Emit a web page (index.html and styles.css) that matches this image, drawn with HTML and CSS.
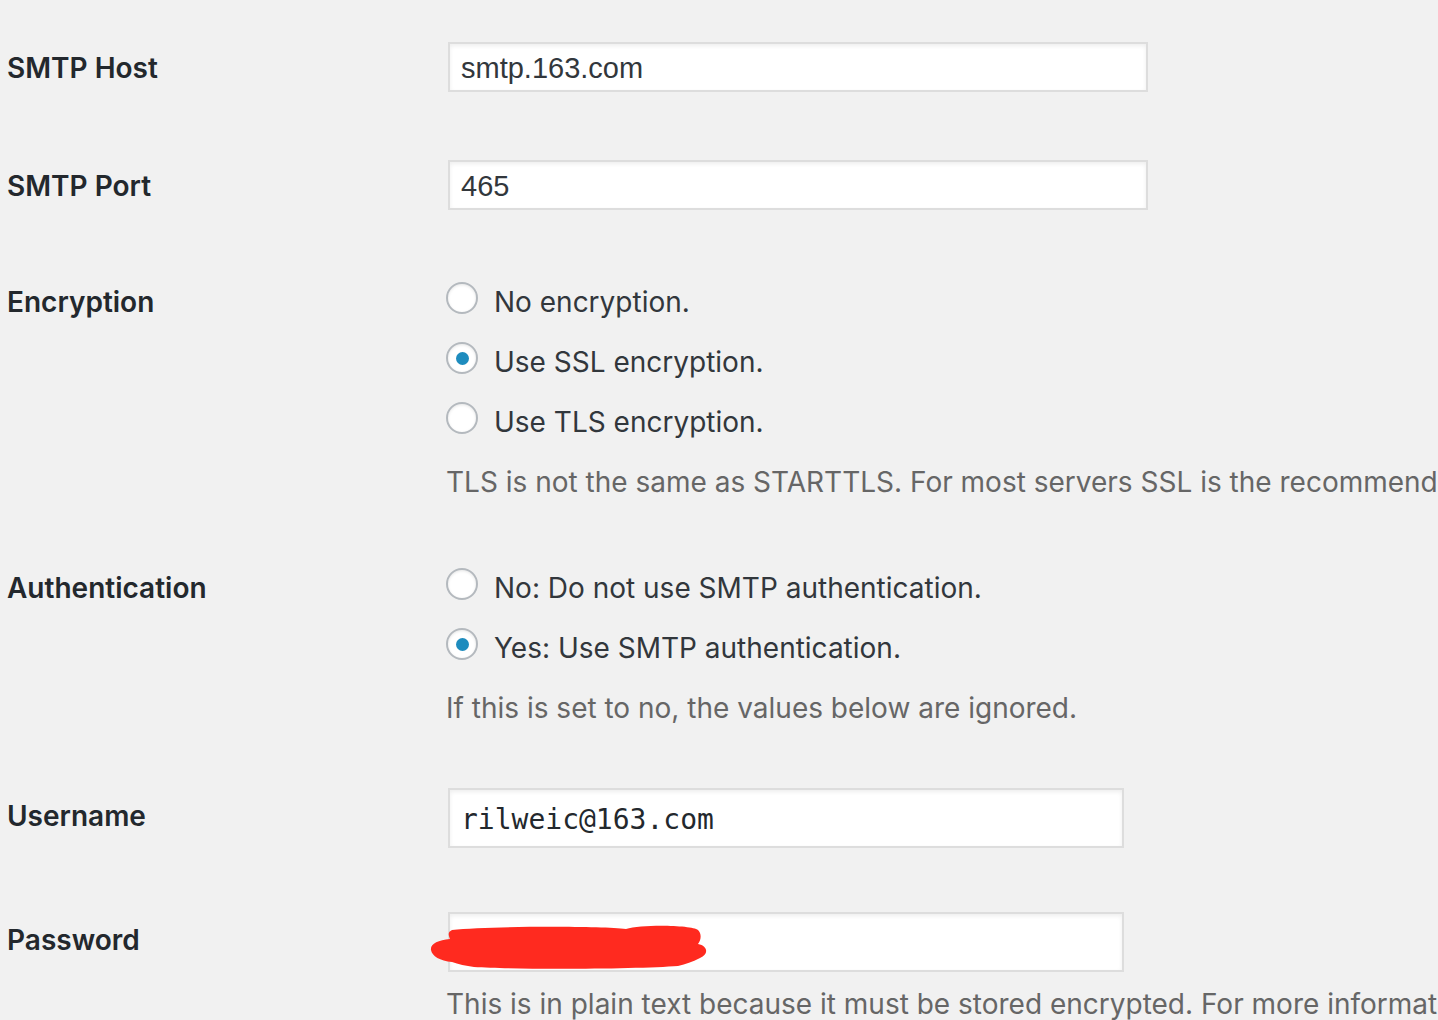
FILE: index.html
```html
<!DOCTYPE html>
<html>
<head>
<meta charset="utf-8">
<link rel="stylesheet" href="styles.css">
</head>
<body>
<div class="form">
  <div class="row row-host">
    <div class="label lh50">SMTP Host</div>
    <div class="field"><div class="input wide">smtp.163.com</div></div>
  </div>
  <div class="row row-port">
    <div class="label lh50">SMTP Port</div>
    <div class="field"><div class="input wide">465</div></div>
  </div>
  <div class="row row-enc">
    <div class="label lh60">Encryption</div>
    <div class="field">
      <div class="radio-line"><span class="radio"></span><span class="rtext">No encryption.</span></div>
      <div class="radio-line"><span class="radio checked"></span><span class="rtext">Use SSL encryption.</span></div>
      <div class="radio-line"><span class="radio"></span><span class="rtext">Use TLS encryption.</span></div>
      <div class="desc">TLS is not the same as STARTTLS. For most servers SSL is the recommended option.</div>
    </div>
  </div>
  <div class="row row-auth">
    <div class="label lh60">Authentication</div>
    <div class="field">
      <div class="radio-line"><span class="radio"></span><span class="rtext">No: Do not use SMTP authentication.</span></div>
      <div class="radio-line"><span class="radio checked"></span><span class="rtext">Yes: Use SMTP authentication.</span></div>
      <div class="desc">If this is set to no, the values below are ignored.</div>
    </div>
  </div>
  <div class="row row-user">
    <div class="label lh60i">Username</div>
    <div class="field"><div class="input mid mono">rilweic@163.com</div></div>
  </div>
  <div class="row row-pass">
    <div class="label lh60i">Password</div>
    <div class="field">
      <div class="pass-wrap">
        <div class="input mid"></div>
        <svg class="scribble" width="280" height="46" viewBox="0 0 280 46">
          <path fill="#ff2a1f" d="M22 6 C60 2 170 2 196 5 C212 0 262 1 268 6 C272 10 271 16 268 20 C278 22 279 30 270 34 C262 38 256 40 248 42 C210 45 90 46 44 43 C36 42 28 40 22 38 C10 37 2 32 1 26 C0 20 8 16 20 15 C18 10 18 8 22 6 Z"/>
        </svg>
      </div>
      <div class="desc">This is in plain text because it must be stored encrypted. For more information, click here.</div>
    </div>
  </div>
</div>
</body>
</html>
```

FILE: styles.css
```css
html, body {
  margin: 0;
  padding: 0;
  background: #f1f1f1;
  overflow: hidden;
}
body {
  width: 1438px;
  height: 1020px;
  font-family: Inter, "Noto Sans", sans-serif;
}
.form {
  padding-left: 7px;
}
.row {
  display: grid;
  grid-template-columns: 441px 1fr;
  align-items: start;
}
.row-host { padding-top: 42px; padding-bottom: 34px; }
.row-port { padding-top: 34px; padding-bottom: 34px; }
.row-enc  { padding-top: 26px; padding-bottom: 22px; }
.row-auth { padding-top: 22px; padding-bottom: 25px; }
.row-user { padding-top: 25px; padding-bottom: 32px; }
.row-pass { padding-top: 32px; }

.label {
  font-size: 28px;
  font-weight: 600;
  color: #23282d;
  white-space: nowrap;
  position: relative;
  top: 1px;
}
.lh50 { line-height: 50px; }
.lh60 { line-height: 60px; top: 2px; }
.lh60i { line-height: 60px; top: -2px; }

.field {
  min-width: 0;
}
.input {
  box-sizing: border-box;
  background: #fff;
  border: 2px solid #ddd;
  box-shadow: inset 0 2px 4px rgba(0, 0, 0, 0.07);
  color: #32373c;
  font-family: "Liberation Sans", Arial, sans-serif;
  font-size: 29px;
  padding: 0 11px;
}
.wide {
  width: 700px;
  height: 50px;
  line-height: 48px;
}
.mid {
  width: 676px;
  height: 60px;
  line-height: 60px;
}
.mono {
  font-family: "DejaVu Sans Mono", monospace;
  font-size: 28px;
  color: #23282d;
}

.radio-line {
  height: 60px;
  display: flex;
  align-items: center;
  white-space: nowrap;
}
.radio {
  box-sizing: border-box;
  flex: none;
  width: 32px;
  height: 32px;
  margin-left: -2px;
  margin-right: 16px;
  border: 2px solid #b4b9be;
  border-radius: 50%;
  background: #fff;
  box-shadow: inset 0 1px 3px rgba(0, 0, 0, 0.1);
  position: relative;
  top: -2px;
  display: flex;
  align-items: center;
  justify-content: center;
}
.radio.checked::after {
  content: "";
  width: 13px;
  height: 13px;
  border-radius: 50%;
  background: #1e8cbe;
}
.rtext {
  font-size: 28px;
  color: #32373c;
  position: relative;
  top: 2px;
}
.desc {
  height: 60px;
  line-height: 60px;
  margin-top: 2px;
  margin-left: -2px;
  font-size: 28px;
  color: #666;
  white-space: nowrap;
}
.pass-wrap {
  position: relative;
  width: 676px;
}
.scribble {
  position: absolute;
  left: -18px;
  top: 12px;
}
```
